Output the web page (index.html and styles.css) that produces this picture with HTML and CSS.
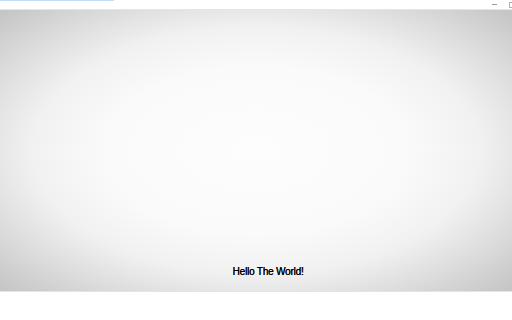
FILE: index.html
```html
<!DOCTYPE html>
<html lang="en">
<head>
    <meta charset="UTF-8">
    <meta name="viewport" content="width=device-width, initial-scale=1.0">
    <title>Hello</title>
    <link rel="stylesheet" href="styles.css">
</head>
<body>
    <div class="titlebar">
        <div class="progress"></div>
        <div class="controls">
            <span class="min"></span>
            <span class="max"></span>
        </div>
    </div>

    <div class="stage">
        <div class="message">Hello The World!</div>
    </div>
</body>
</html>
```

FILE: styles.css
```css
html, body {
    margin: 0;
    padding: 0;
    background: #fff;
}
body {
    width: 512px;
    height: 320px;
    overflow: hidden;
    font-family: "Liberation Sans", Arial, sans-serif;
}
.titlebar {
    position: relative;
    height: 9px;
    border-bottom: 1px solid #e6e6e6;
    display: flex;
    justify-content: flex-end;
}
.progress {
    position: absolute;
    left: 0;
    top: 0;
    width: 114px;
    height: 1px;
    background: #c4dcfa;
}
.controls {
    display: flex;
    align-items: center;
    gap: 12px;
    margin-right: -3px;
}
.min {
    width: 5px;
    height: 1px;
    background: #9a9a9a;
}
.max {
    width: 4px;
    height: 4px;
    border: 1px solid #b0b0b0;
}
.stage {
    height: 281px;
    border-bottom: 1px solid #e4e4e4;
    background: radial-gradient(ellipse at center, #fdfdfd 0%, #fafafa 42%, #f1f1f1 62%, #dcdcdc 80%, #c4c4c4 100%);
    display: flex;
    flex-direction: column;
    justify-content: flex-end;
    align-items: center;
}
.message {
    font-size: 10px;
    color: #000;
    margin-bottom: 14px;
    margin-left: 24px;
    letter-spacing: -0.2px;
    text-shadow: 0.3px 0 0 #000;
}
```
